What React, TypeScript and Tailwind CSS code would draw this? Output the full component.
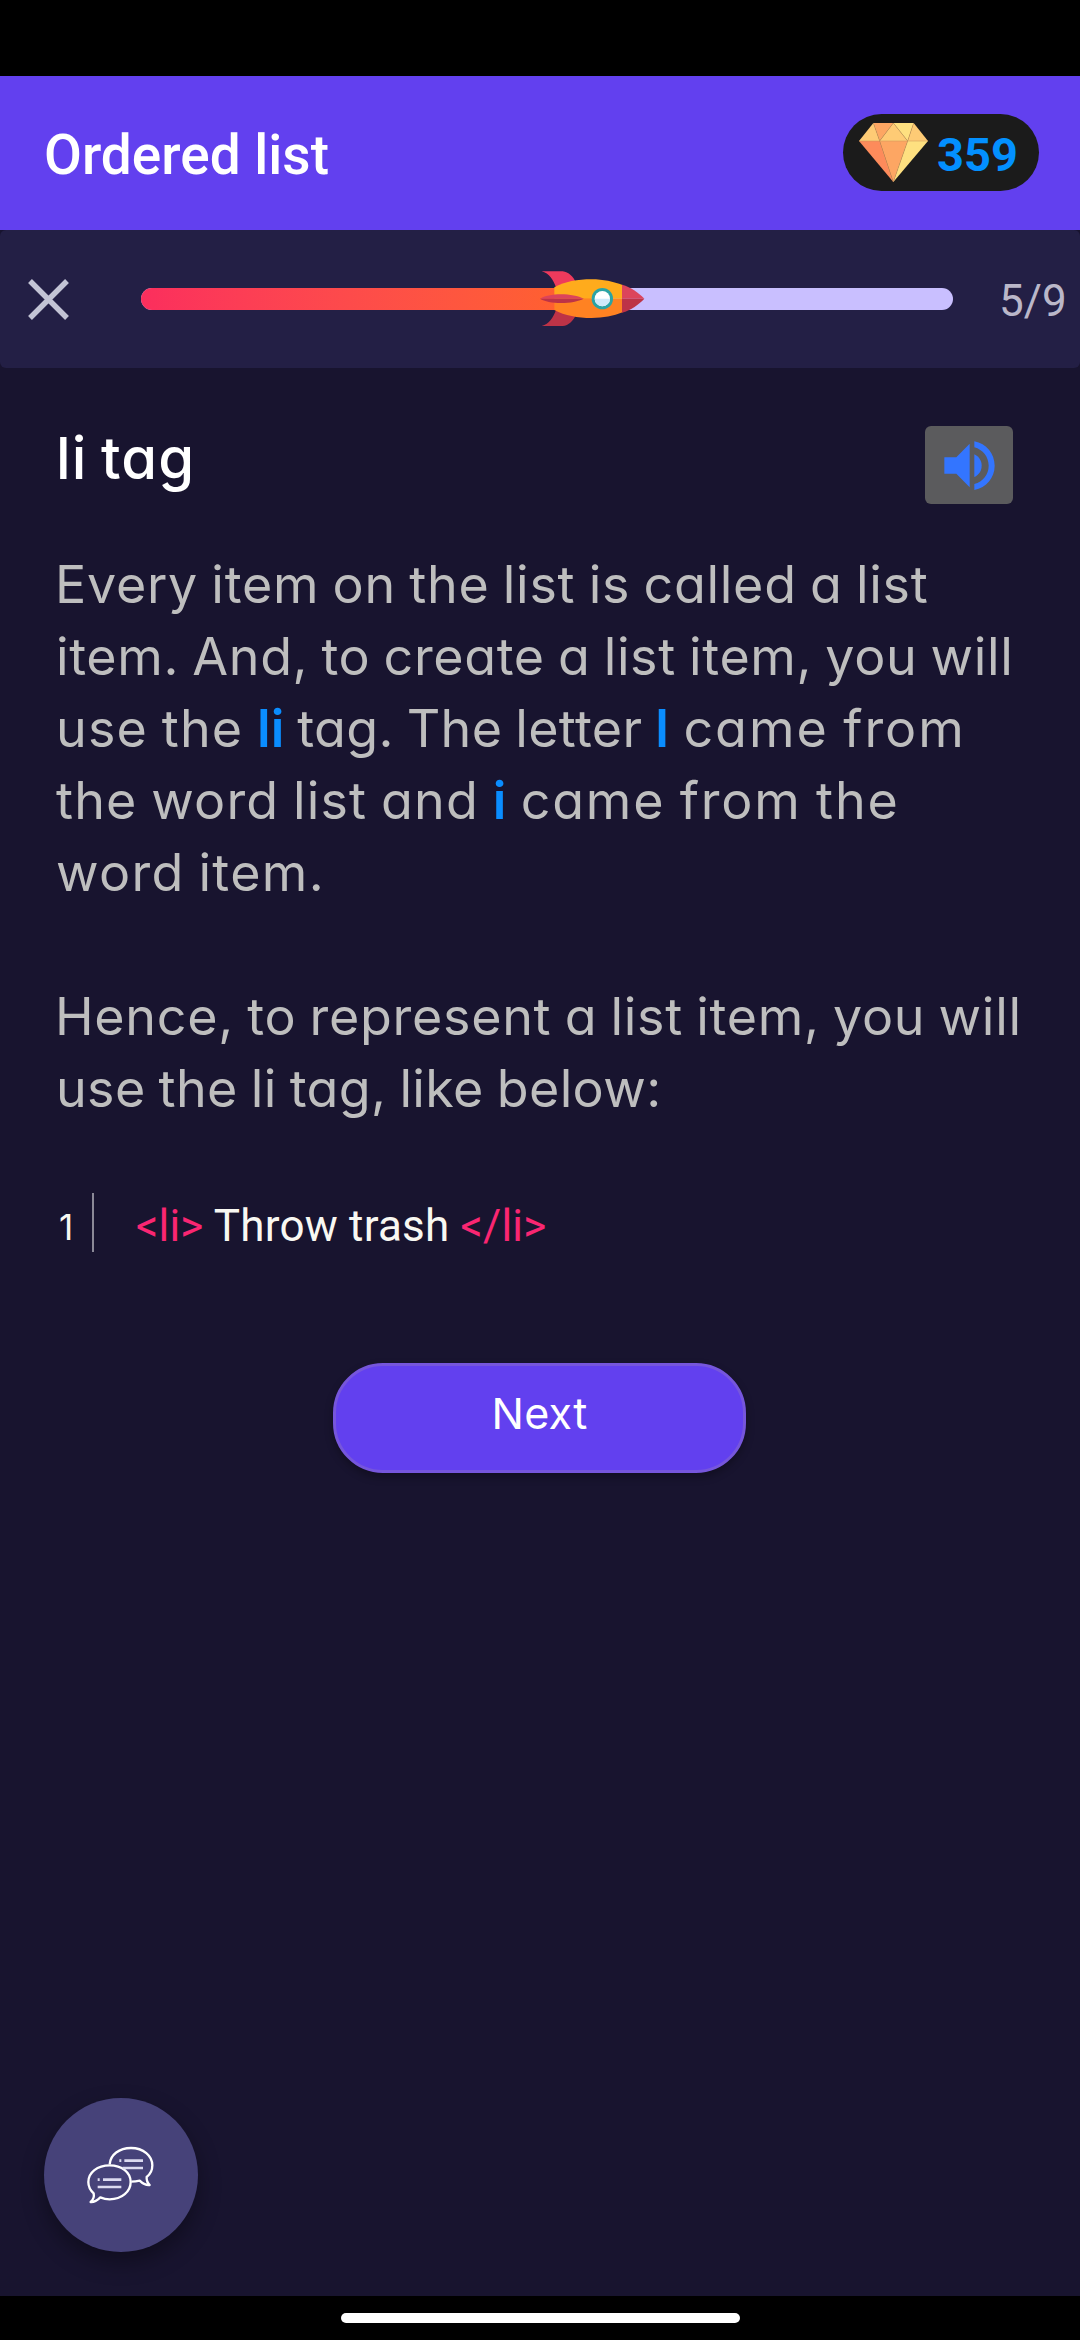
import type { ReactNode } from "react";

function Diamond() {
  return (
    <svg className="-mt-px h-[59px] w-[69px]" viewBox="117 99 207 177">
      <path d="M160 99H220L179 153Z" fill="#fda663" />
      <path d="M160 99L179 153H117Z" fill="#fecb75" />
      <path d="M220 99L263 153H179Z" fill="#fecb75" />
      <path d="M220 99H281L263 153Z" fill="#fee080" />
      <path d="M281 99L324 153H263Z" fill="#fecb75" />
      <path d="M117 153H179L220 276Z" fill="#fd8b5b" />
      <path d="M179 153H263L220 276Z" fill="#fda663" />
      <path d="M263 153H324L220 276Z" fill="#fee080" />
      <path d="M117 153H324M160 99L179 153L220 99L263 153L281 99M179 153L220 276L263 153" fill="none" stroke="#c9955a" strokeWidth="1.5" />
    </svg>
  );
}

function Rocket() {
  return (
    <svg className="absolute -top-[18px] left-[399px] h-[57px] w-[105px]" viewBox="60 60 315 171">
      <path d="M65 64H128C146 66 160 80 168 98L108 112C100 90 88 70 65 64Z" fill="#ee3a5c" />
      <path d="M65 228H128C146 226 160 212 168 194L108 180C100 202 88 222 65 228Z" fill="#bd3347" />
      <path d="M103 112C135 95 172 88 215 88C250 88 280 95 308 105V146H103Z" fill="#ffab1c" />
      <path d="M103 180C135 197 172 204 215 204C250 204 280 198 308 187V146H103Z" fill="#ff8222" />
      <path d="M306 104C334 112 356 128 373 146H306Z" fill="#dc445b" />
      <path d="M306 188C334 180 356 164 373 146H306Z" fill="#bd3347" />
      <path d="M60 146C85 128 160 128 191 146Z" fill="#dc445b" />
      <path d="M60 146C85 163 160 163 191 146Z" fill="#bd3347" />
      <circle cx="247" cy="146" r="32" fill="#2ba3a4" />
      <circle cx="247" cy="146" r="23" fill="#ffffff" />
      <path d="M224 146A23 23 0 0 0 270 146Z" fill="#cfeafa" />
    </svg>
  );
}

function Speaker() {
  return (
    <svg className="h-[49px] w-[51px]" viewBox="132 661 151 147" fill="#3375ff">
      <path d="M132 710H168L208 669V800L168 759H132Z" />
      <path d="M222 701C236 708 244 720 244 735S236 762 222 769Z" />
      <path d="M222 662C258 669 283 699 283 735S258 801 222 808V790C248 783 265 761 265 735S248 687 222 680Z" />
    </svg>
  );
}

function Chat() {
  return (
    <svg className="h-[60px] w-[70px]" viewBox="170 195 210 180" fill="none" stroke="#ffffff" strokeWidth="7" strokeLinejoin="round">
      <path d="M241 253C243 224 270 204 305 204C342 204 369 227 369 256C369 271 363 283 352 291C351 301 355 309 361 315C349 316 340 311 331 302C323 304 315 305 306 305" />
      <path d="M241 256C278 256 304 278 304 306S278 358 241 358C231 358 222 356 213 352C204 361 196 367 184 366C192 359 195 350 193 340C183 331 177 319 177 306C177 278 204 256 241 256Z" />
      <g stroke="#dcdaf0" strokeWidth="8">
        <path d="M270 242H276M285 242H341M280 264H341M205 299H211M221 299H276M205 321H276" />
      </g>
    </svg>
  );
}

function Line({ children, className }: { children?: ReactNode; className?: string }) {
  return <div className={`h-[72px] whitespace-pre ${className ?? ""}`}>{children}</div>;
}

function Mark({ children }: { children: ReactNode }) {
  return <span className="font-semibold text-[#0a8dff]">{children}</span>;
}

export default function App() {
  return (
    <div className="flex h-[2340px] w-[1080px] flex-col overflow-hidden bg-[#18142f] font-['Inter',sans-serif]">
      <div className="h-[76px] shrink-0 bg-black" />

      <header className="flex h-[154px] shrink-0 items-center justify-between bg-[#6240ef] pr-[41px] pb-px pl-[44px] font-['Roboto',sans-serif]">
        <h1 className="mt-[6px] text-[55px] leading-none font-medium text-white">Ordered list</h1>
        <div className="flex h-[77px] w-[196px] items-center rounded-full bg-[#1b1b1b] pl-[16px]">
          <Diamond />
          <span className="mt-[3px] ml-[9px] text-[47px] leading-none font-bold text-[#0390ff]">359</span>
        </div>
      </header>

      <section className="flex h-[138px] shrink-0 items-center rounded-[6px] bg-[#231f45] pl-[28px]">
        <svg className="h-[41px] w-[41px]" viewBox="0 0 41 41" stroke="#c3c4d5" strokeWidth="5.4">
          <path d="M2 2L39 39M39 2L2 39" />
        </svg>
        <div className="relative ml-[72px] h-[22px] w-[812px] rounded-[11px] bg-[#c9bfff]">
          <div className="h-full w-[450px] rounded-l-[11px] bg-linear-to-r from-[#fb2e5d] to-[#ff632a]" />
          <Rocket />
        </div>
        <span className="mt-[3px] ml-[46px] font-['Roboto',sans-serif] text-[44px] leading-none text-[#bab7c9]">5/9</span>
      </section>

      <main className="flex flex-1 flex-col px-[56px] [font-feature-settings:'cv11']">
        <div className="mt-[58px] flex h-[78px] items-start justify-between pr-[11px]">
          <h2 className="text-[58px] leading-[64px] font-medium tracking-[1.1px] text-white [word-spacing:-3px]">li tag</h2>
          <button className="flex h-[78px] w-[88px] items-center justify-center rounded-[6px] bg-[#5b5b5d]">
            <Speaker />
          </button>
        </div>

        <div className="mt-[45px] -mr-[56px] text-[52px] leading-[72px] text-[#bebebe] [font-optical-sizing:none] [word-spacing:-2px]">
          <Line className="-ml-px tracking-[0.72px]">Every item on the list is called a list</Line>
          <Line className="tracking-[0.62px]">item. And, to create a list item, you will</Line>
          <Line>
            <span className="tracking-[1.15px]">use the </span>
            <Mark>li</Mark>
            <span className="tracking-[0.33px]"> tag. The letter </span>
            <Mark>l</Mark>
            <span className="tracking-[1.95px]"> came from</span>
          </Line>
          <Line>
            <span className="tracking-[1.15px]">the word list and </span>
            <Mark>i</Mark>
            <span className="tracking-[1.8px]"> came from the</span>
          </Line>
          <Line className="tracking-[1.3px]">word item.</Line>
          <Line />
          <Line className="-ml-px tracking-[0.7px]">Hence, to represent a list item, you will</Line>
          <Line className="tracking-[0.37px]">use the li tag, like below:</Line>
        </div>

        <div className="mt-[68px] flex h-[59px] items-center">
          <span className="mt-[9px] w-[36px] pl-[3px] text-[35px] leading-none text-[#f8f8f2]">1</span>
          <div className="h-[59px] w-[2px] bg-[#8b8997]" />
          <code className="mt-[6px] ml-[42px] font-['Roboto',sans-serif] text-[44px] leading-none tracking-[0.2px] whitespace-pre text-[#f92672]">
            &lt;li&gt;<span className="text-[#f8f8f2]"> Throw trash </span>&lt;/li&gt;
          </code>
        </div>

        <button className="mt-[111px] ml-[277px] flex h-[110px] w-[413px] items-center justify-center rounded-[50px] border-3 border-[#7656dc] bg-[#6240ef] pb-[10px] text-[43px] leading-none tracking-[0.3px] text-white shadow-[0_4px_8px_rgba(0,0,0,0.3)]">
          Next
        </button>

        <button className="mt-auto mb-[44px] -ml-[12px] flex h-[154px] w-[154px] items-center justify-center rounded-full bg-[#464279] shadow-[0_10px_22px_rgba(0,0,0,0.35)]">
          <Chat />
        </button>
      </main>

      <footer className="flex h-[44px] shrink-0 justify-center bg-black pt-[17px]">
        <div className="h-[10px] w-[399px] rounded-full bg-white" />
      </footer>
    </div>
  );
}
